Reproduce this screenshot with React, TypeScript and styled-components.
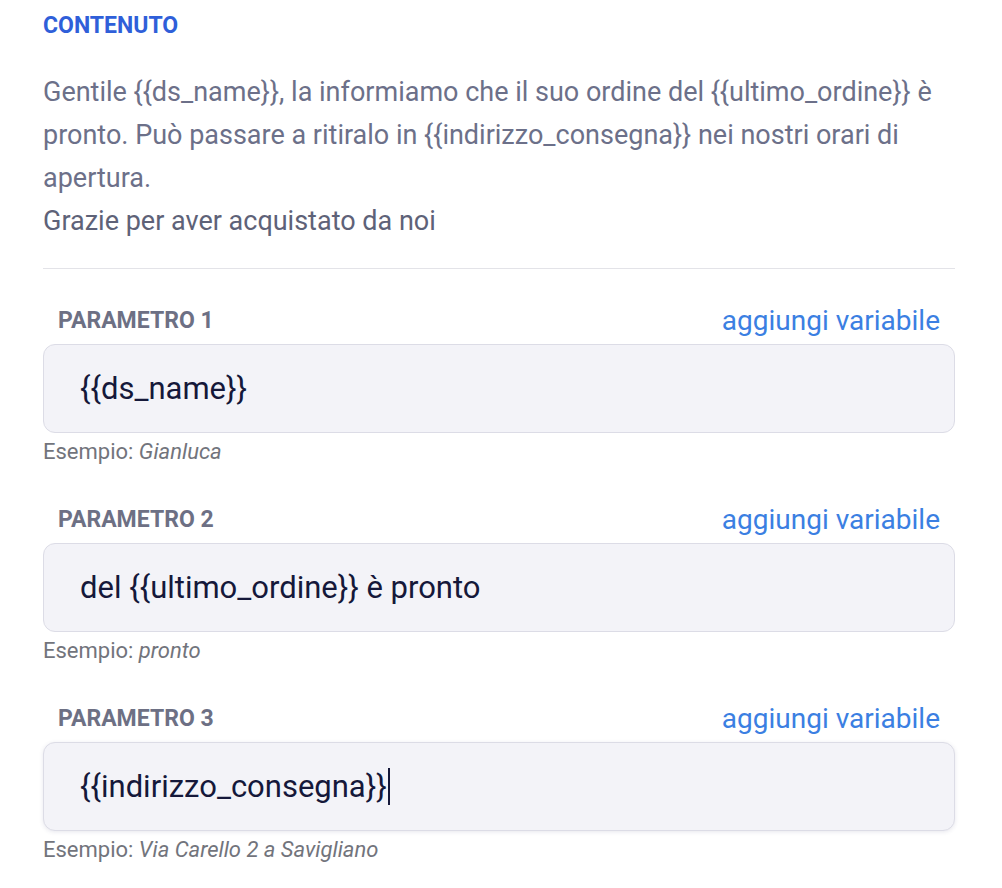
import styled, { createGlobalStyle } from "styled-components";

const GlobalStyle = createGlobalStyle`
  body {
    margin: 0;
    background: #ffffff;
    font-family: "Roboto", "Liberation Sans", sans-serif;
  }
`;

const Page = styled.div`
  width: 912px;
  padding: 10px 0 0 43px;
`;

const SectionTitle = styled.h2`
  margin: 0;
  font-size: 23px;
  font-weight: 700;
  color: #2f5fd9;
  line-height: 32px;
`;

const Body = styled.div`
  margin-top: 29px;
  font-size: 27px;
  line-height: 43px;
  color: #6c7089;
`;

const Paragraph = styled.p<{ $dark?: boolean }>`
  margin: 0;
  color: ${(p) => (p.$dark ? "#5e6278" : "#6c7089")};
`;

const Divider = styled.hr`
  margin: 25px 0 0;
  border: 0;
  border-top: 1px solid #e3e3e8;
`;

const Params = styled.div`
  display: flex;
  flex-direction: column;
  gap: 39px;
  margin-top: 36px;
`;

const Param = styled.div`
  display: flex;
  flex-direction: column;
`;

const LabelRow = styled.div`
  display: flex;
  justify-content: space-between;
  align-items: center;
  padding: 0 15px;
  height: 30px;
`;

const Label = styled.span`
  font-size: 23px;
  font-weight: 700;
  color: #6d7084;
`;

const AddLink = styled.a`
  font-size: 28px;
  color: #3b7fe2;
  text-decoration: none;
  cursor: pointer;
`;

const Field = styled.div<{ $focused?: boolean }>`
  margin-top: 9px;
  height: 89px;
  box-sizing: border-box;
  display: flex;
  align-items: center;
  padding: 0 36px;
  background: #f3f3f8;
  border: 1px solid #dcdce6;
  border-radius: 12px;
  font-size: 31px;
  color: #15183a;
  box-shadow: ${(p) => (p.$focused ? "0 1px 4px rgba(60, 60, 110, 0.12)" : "none")};
`;

const Caret = styled.span`
  display: inline-block;
  width: 2px;
  height: 37px;
  background: #15183a;
  margin-left: 1px;
`;

const Example = styled.div`
  margin-top: 6px;
  font-size: 22px;
  line-height: 26px;
  color: #72747c;

  em {
    font-style: italic;
  }
`;

const message =
  "Gentile {{ds_name}}, la informiamo che il suo ordine del {{ultimo_ordine}} è pronto. Può passare a ritiralo in {{indirizzo_consegna}} nei nostri orari di apertura.";

const params = [
  { label: "PARAMETRO 1", value: "{{ds_name}}", example: "Gianluca" },
  { label: "PARAMETRO 2", value: "del {{ultimo_ordine}} è pronto", example: "pronto" },
  {
    label: "PARAMETRO 3",
    value: "{{indirizzo_consegna}}",
    example: "Via Carello 2 a Savigliano",
    focused: true,
  },
];

export default function App() {
  return (
    <>
      <GlobalStyle />
      <Page>
        <SectionTitle>CONTENUTO</SectionTitle>
        <Body>
          <Paragraph>{message}</Paragraph>
          <Paragraph $dark>Grazie per aver acquistato da noi</Paragraph>
        </Body>
        <Divider />
        <Params>
          {params.map((p) => (
            <Param key={p.label}>
              <LabelRow>
                <Label>{p.label}</Label>
                <AddLink>aggiungi variabile</AddLink>
              </LabelRow>
              <Field $focused={p.focused}>
                {p.value}
                {p.focused && <Caret />}
              </Field>
              <Example>
                Esempio: <em>{p.example}</em>
              </Example>
            </Param>
          ))}
        </Params>
      </Page>
    </>
  );
}
